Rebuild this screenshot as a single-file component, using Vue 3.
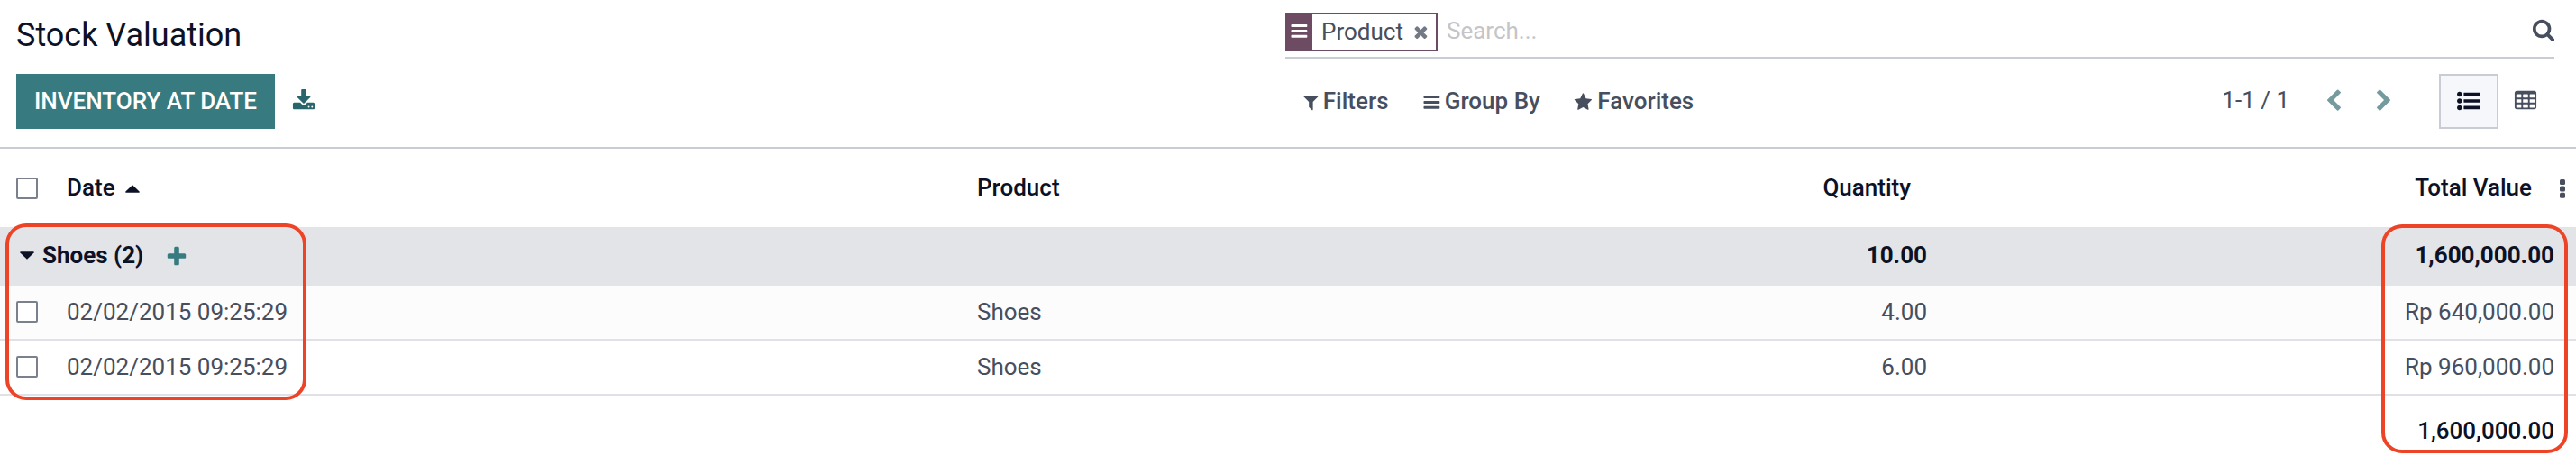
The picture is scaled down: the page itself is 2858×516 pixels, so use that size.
<script setup>
const icons = {
  download: 'M1344 1344q0-26-19-45t-45-19-45 19-19 45 19 45 45 19 45-19 19-45zm256 0q0-26-19-45t-45-19-45 19-19 45 19 45 45 19 45-19 19-45zm128-224v320q0 40-28 68t-68 28h-1472q-40 0-68-28t-28-68v-320q0-40 28-68t68-28h465l135 136q58 56 136 56t136-56l136-136h464q40 0 68 28t28 68zm-325-569q17 41-14 70l-448 448q-18 19-45 19t-45-19l-448-448q-31-29-14-70 17-39 59-39h256v-448q0-26 19-45t45-19h256q26 0 45 19t19 45v448h256q42 0 59 39z',
  filter: 'M1595 295q17 41-14 70l-493 493v742q0 42-39 59-13 5-25 5-27 0-45-19l-256-256q-19-19-19-45v-486l-493-493q-31-29-14-70 17-39 59-39h1280q42 0 59 39z',
  bars: 'M1664 1344v128q0 26-19 45t-45 19h-1408q-26 0-45-19t-19-45v-128q0-26 19-45t45-19h1408q26 0 45 19t19 45zm0-512v128q0 26-19 45t-45 19h-1408q-26 0-45-19t-19-45v-128q0-26 19-45t45-19h1408q26 0 45 19t19 45zm0-512v128q0 26-19 45t-45 19h-1408q-26 0-45-19t-19-45v-128q0-26 19-45t45-19h1408q26 0 45 19t19 45z',
  star: 'M1728 647q0 22-26 48l-363 354 86 500q1 7 1 20 0 21-10.500 35.500t-30.500 14.500q-19 0-40-12l-449-236-449 236q-22 12-40 12-21 0-31.500-14.500t-10.500-35.500q0-6 2-20l86-500-364-354q-25-27-25-48 0-37 56-46l502-73 225-455q19-41 49-41t49 41l225 455 502 73q56 9 56 46z',
  times: 'M1490 1322q0 40-28 68l-136 136q-28 28-68 28t-68-28l-294-294-294 294q-28 28-68 28t-68-28l-136-136q-28-28-28-68t28-68l294-294-294-294q-28-28-28-68t28-68l136-136q28-28 68-28t68 28l294 294 294-294q28-28 68-28t68 28l136 136q28 28 28 68t-28 68l-294 294 294 294q28 28 28 68z',
  search: 'M1216 832q0-185-131.500-316.500t-316.500-131.500-316.500 131.500-131.500 316.500 131.500 316.500 316.500 131.500 316.500-131.500 131.500-316.500zm512 832q0 52-38 90t-90 38q-54 0-90-38l-343-342q-179 124-399 124-143 0-273.500-55.500t-225-150-150-225-55.500-273.500 55.500-273.500 150-225 225-150 273.500-55.500 273.500 55.500 225 150 150 225 55.500 273.500q0 220-124 399l343 343q37 37 37 90z',
  left: 'M1427 301l-531 531 531 531q19 19 19 45t-19 45l-166 166q-19 19-45 19t-45-19l-742-742q-19-19-19-45t19-45l742-742q19-19 45-19t45 19l166 166q19 19 19 45t-19 45z',
  right: 'M1363 877l-742 742q-19 19-45 19t-45-19l-166-166q-19-19-19-45t19-45l531-531-531-531q-19-19-19-45t19-45l166-166q19-19 45-19t45 19l742 742q19 19 19 45t-19 45z',
  list: 'M384 1408q0 80-56 136t-136 56-136-56-56-136 56-136 136-56 136 56 56 136zm0-512q0 80-56 136t-136 56-136-56-56-136 56-136 136-56 136 56 56 136zm1408 416v192q0 13-9.500 22.500t-22.500 9.500h-1216q-13 0-22.500-9.500t-9.500-22.500v-192q0-13 9.500-22.500t22.500-9.500h1216q13 0 22.500 9.500t9.500 22.500zm-1408-928q0 80-56 136t-136 56-136-56-56-136 56-136 136-56 136 56 56 136zm1408 416v192q0 13-9.500 22.500t-22.500 9.500h-1216q-13 0-22.500-9.500t-9.500-22.500v-192q0-13 9.500-22.500t22.500-9.500h1216q13 0 22.500 9.500t9.500 22.500zm0-512v192q0 13-9.500 22.500t-22.500 9.500h-1216q-13 0-22.500-9.500t-9.500-22.500v-192q0-13 9.500-22.500t22.500-9.500h1216q13 0 22.500 9.500t9.500 22.500z',
  table: 'M224 128h1344q66 0 113 47t47 113v1088q0 66-47 113t-113 47h-1344q-66 0-113-47t-47-113v-1088q0-66 47-113t113-47zM192 416v192q0 32 32 32h320q32 0 32-32v-192q0-32-32-32h-320q-32 0-32 32zM704 416v192q0 32 32 32h320q32 0 32-32v-192q0-32-32-32h-320q-32 0-32 32zM1216 416v192q0 32 32 32h320q32 0 32-32v-192q0-32-32-32h-320q-32 0-32 32zM192 800v192q0 32 32 32h320q32 0 32-32v-192q0-32-32-32h-320q-32 0-32 32zM704 800v192q0 32 32 32h320q32 0 32-32v-192q0-32-32-32h-320q-32 0-32 32zM1216 800v192q0 32 32 32h320q32 0 32-32v-192q0-32-32-32h-320q-32 0-32 32zM192 1184v192q0 32 32 32h320q32 0 32-32v-192q0-32-32-32h-320q-32 0-32 32zM704 1184v192q0 32 32 32h320q32 0 32-32v-192q0-32-32-32h-320q-32 0-32 32zM1216 1184v192q0 32 32 32h320q32 0 32-32v-192q0-32-32-32h-320q-32 0-32 32z',
  plus: 'M1600 736v192q0 40-28 68t-68 28h-416v416q0 40-28 68t-68 28h-192q-40 0-68-28t-28-68v-416h-416q-40 0-68-28t-28-68v-192q0-40 28-68t68-28h416v-416q0-40 28-68t68-28h192q40 0 68 28t28 68v416h416q40 0 68 28t28 68z',
}

const rows = [
  { date: '02/02/2015 09:25:29', product: 'Shoes', quantity: '4.00', value: 'Rp 640,000.00' },
  { date: '02/02/2015 09:25:29', product: 'Shoes', quantity: '6.00', value: 'Rp 960,000.00' },
]
</script>

<template>
  <div class="page">
    <header class="panel">
      <section class="side">
        <h1>Stock Valuation</h1>
        <div class="actions">
          <button class="primary">INVENTORY AT DATE</button>
          <svg class="icon download" viewBox="0 0 1792 1792"><path :d="icons.download" /></svg>
        </div>
      </section>
      <section class="tools">
        <div class="searchbar">
          <div class="facet">
            <span class="facet-icon"><svg class="icon small" viewBox="0 0 1792 1792"><path :d="icons.bars" /></svg></span>
            <span class="facet-label">Product</span>
            <svg class="icon small remove" viewBox="0 0 1792 1792"><path :d="icons.times" /></svg>
          </div>
          <span class="placeholder">Search...</span>
          <svg class="icon magnifier" viewBox="0 0 1792 1792"><path :d="icons.search" /></svg>
        </div>
        <div class="controls">
          <div class="menu filters"><svg class="icon small" viewBox="0 0 1792 1792"><path :d="icons.filter" /></svg><span>Filters</span></div>
          <div class="menu group-by"><svg class="icon small" viewBox="0 0 1792 1792"><path :d="icons.bars" /></svg><span>Group By</span></div>
          <div class="menu favorites"><svg class="icon small" viewBox="0 0 1792 1792"><path :d="icons.star" /></svg><span>Favorites</span></div>
          <span class="pager">1-1 / 1</span>
          <svg class="icon arrow prev" viewBox="0 0 1792 1792"><path :d="icons.left" /></svg>
          <svg class="icon arrow next" viewBox="0 0 1792 1792"><path :d="icons.right" /></svg>
          <span class="view active"><svg class="icon" viewBox="0 0 1792 1792"><path :d="icons.list" /></svg></span>
          <span class="view"><svg class="icon" viewBox="0 0 1792 1792"><path fill-rule="evenodd" :d="icons.table" /></svg></span>
        </div>
      </section>
    </header>

    <main class="list">
      <div class="row head">
        <span class="box"></span>
        <span class="date">Date<svg class="caret" viewBox="0 0 16 9"><path d="M8 0.3 15.6 7.6q.5 1.100-.7 1.100H1.100Q-.1 8.700.4 7.600z" /></svg></span>
        <span>Product</span>
        <span class="num">Quantity</span>
        <span class="num">Total Value</span>
        <svg class="dots" viewBox="0 0 6 21"><rect width="6" height="6" rx="1.500" /><rect y="7.400" width="6" height="6" rx="1.500" /><rect y="14.800" width="6" height="6" rx="1.500" /></svg>
      </div>
      <div class="row group">
        <span class="group-name">
          <svg class="caret" viewBox="0 0 16 9"><path d="M8 8.700.4 1.400Q-.1.3 1.100.3H14.900q1.200 0 .7 1.100z" /></svg>
          <span>Shoes (2)</span>
          <svg class="icon plus" viewBox="0 0 1792 1792"><path :d="icons.plus" /></svg>
        </span>
        <span class="num">10.00</span>
        <span class="num">1,600,000.00</span>
      </div>
      <div v-for="(row, i) in rows" :key="i" class="row record">
        <span class="box"></span>
        <span>{{ row.date }}</span>
        <span>{{ row.product }}</span>
        <span class="num">{{ row.quantity }}</span>
        <span class="num">{{ row.value }}</span>
      </div>
      <div class="row foot"><span class="num">1,600,000.00</span></div>
    </main>

    <div class="mark mark-left"></div>
    <div class="mark mark-right"></div>
  </div>
</template>

<style>
body { margin: 0; background: #fff; }
</style>

<style scoped>
.page {
  position: relative;
  width: 2858px;
  height: 516px;
  overflow: hidden;
  background: #fff;
  color: #474e5d;
  font: 400 26px/39px Roboto, sans-serif;
}
.page * { box-sizing: border-box; }
.page span { white-space: nowrap; }
.icon { width: 26px; height: 26px; flex: none; fill: currentColor; display: block; }
.icon.small { width: 20.8px; height: 20.8px; }

.panel { display: flex; height: 165px; border-bottom: 2px solid #c9ccd2; }
.side { width: 1408px; margin-left: 18px; }
h1 { margin: 12px 0 0; font-size: 36px; line-height: 54px; font-weight: 400; color: #0c1126; }
.actions { display: flex; margin-top: 16px; }
.primary {
  width: 287px; height: 61px; padding: 0; border: 0;
  background: #377b80; color: #fff;
  font: 500 26px/39px Roboto, sans-serif;
}
.download { margin: 16.5px 0 0 19px; color: #28666b; }

.tools { width: 1408px; }
.searchbar { display: flex; height: 65px; padding-top: 14px; border-bottom: 2px solid #c9ccd2; }
.facet { display: flex; width: 169px; height: 43px; border: 2px solid #6c4b63; }
.facet-icon { display: flex; width: 28px; padding: 8px 0 0 2.5px; background: #6c4b63; color: #fff; }
.facet-label { margin-left: 10px; width: 92px; }
.remove { margin: 9px 0 0 8px; color: #737985; }
.placeholder { margin: 1px 0 0 10px; height: 39px; color: #c5c5c7; }
.magnifier { margin: 5.5px -1px 0 auto; }

.controls { display: flex; height: 61px; margin-top: 17px; }
.menu { display: flex; margin-top: 11px; font-weight: 500; }
.menu .icon { margin-top: 10px; }
.menu span { margin-left: 4.5px; }
.filters { margin-left: 18px; width: 133.5px; }
.menu.filters span { margin-left: 3px; }
.group-by { width: 168.5px; }
.menu.favorites span { margin-left: 5.5px; }
.pager { margin: 10px 0 0 auto; }
.arrow { margin-top: 17px; color: #759b9f; }
.prev { margin-left: 35.5px; }
.next { margin-left: 30px; }
.view { display: flex; width: 66px; height: 61px; padding: 16px 0 0 20px; }
.view:last-child { width: 62px; padding: 16.5px 0 0 17px; }
.view.active { margin-left: 48.5px; padding: 14.5px 0 0 18px; border: 2px solid #c9ccd2; background: #f5f7fa; color: #0c1126; }

.row { display: grid; grid-template-columns: 56px 1010px 854px 200px 696px; padding-left: 18px; align-items: center; }
.num { text-align: right; }
.box { width: 24px; height: 24px; border: 2px solid #7b808d; border-radius: 2px; background: #fff; }
.caret { width: 16px; height: 9px; fill: currentColor; flex: none; }
.head { grid-template-columns: 56px 1010px 836px 200px 689px 37px; height: 87px; font-weight: 500; color: #0c1126; }
.head .box { margin-top: 1px; }
.date .caret { margin-left: 11.5px; vertical-align: 3.5px; }
.dots { width: 6px; height: 21px; margin: 2px 0 0 31px; fill: #474e5d; }
.group { grid-template-columns: 1920px 200px 696px; height: 65px; padding-bottom: 2px; background: #e2e4e8; color: #0c1126; font-weight: 700; }
.group-name { display: flex; align-items: center; padding-left: 4px; }
.group-name span { margin-left: 9px; }
.plus { margin: 2px 0 0 24px; }
.group .plus { color: #377b80; }
.record { height: 61px; border-bottom: 2px solid #dfe1e6; }
.record .box { margin-top: -1px; }
.record:nth-child(3) { background: #fcfcfc; }
.foot { grid-template-columns: 2816px; padding-top: 20px; color: #0c1126; font-weight: 500; }

.mark { position: absolute; border: 4px solid #ed4428; border-radius: 23px; }
.mark-left { left: 6px; top: 248px; width: 334px; height: 196px; }
.mark-right { left: 2642px; top: 249px; width: 207px; height: 254px; }
</style>
